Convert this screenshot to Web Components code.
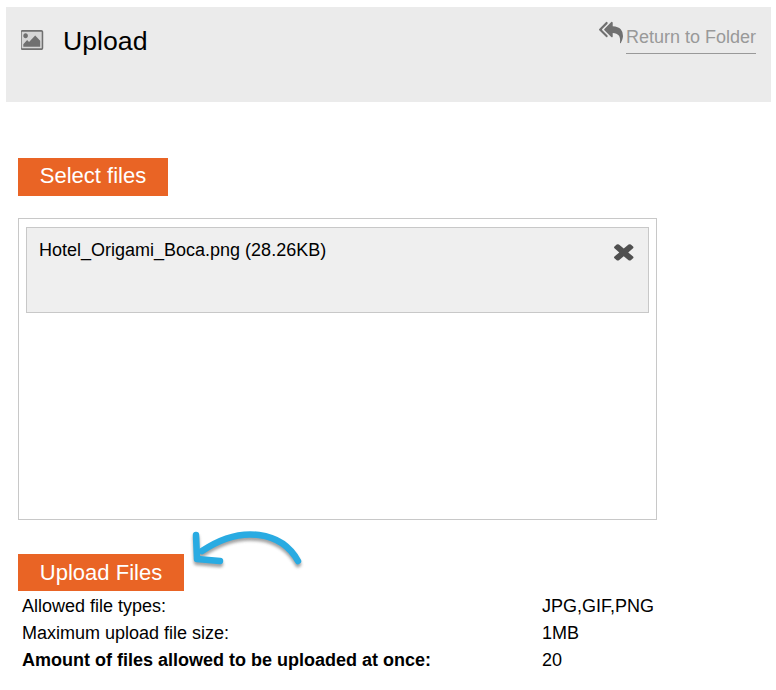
<!DOCTYPE html>
<html>
<head>
<meta charset="utf-8">
<title>Upload</title>
<style>
	html, body { margin: 0; padding: 0; background: #fff; }
	body { font-family: "Liberation Sans", Arial, sans-serif; color: #000; }
	orange-button[slot="select"] { padding-bottom: 2px; }
</style>
</head>
<body>
<upload-page>
	<upload-header slot="header" title="Upload" link="Return to Folder"></upload-header>
	<orange-button slot="select" width="150" height="38">Select files</orange-button>
	<file-item slot="file">Hotel_Origami_Boca.png (28.26KB)</file-item>
	<orange-button slot="upload" width="166" height="37">Upload Files</orange-button>
	<limits-table slot="limits"></limits-table>
</upload-page>

<script>
class UploadHeader extends HTMLElement {
	connectedCallback() {
		const shadow = this.attachShadow({ mode: "open" });
		shadow.innerHTML = `
			<style>
				:host {
					display: flex;
					justify-content: space-between;
					box-sizing: border-box;
					height: 95px;
					margin: 0 5px 0 6px;
					padding: 0 15px 0 15px;
					background: #ebebeb;
				}
				.title { display: flex; align-items: flex-start; padding-top: 19px; }
				svg.pic { width: 23px; height: 20px; margin-top: 4px; }
				h1 { margin: 0 0 0 19px; font-size: 26.67px; line-height: 30px; font-weight: normal; color: #000; }
				.back { display: flex; align-items: flex-start; padding-top: 15px; }
				svg.reply { width: 24px; height: 24px; margin-right: 3px; margin-top: -1px; }
				a {
					display: block;
					margin-top: 5px;
					height: 26px;
					line-height: 21px;
					font-size: 18px;
					color: #999;
					border-bottom: 1px solid #999;
					text-decoration: none;
				}
			</style>
			<div class="title">
				<svg class="pic" viewBox="0 128 1920 1536" preserveAspectRatio="none">
					<rect x="80" y="200" width="1760" height="1392" fill="#d6d6d6"/>
					<path fill="#707070" d="M576 576q0 80-56 136t-136 56-136-56-56-136 56-136 136-56 136 56 56 136zm1024 384v448h-1408v-192l320-320 160 160 512-512zm96-704h-1600q-13 0-22.500 9.500t-9.500 22.500v1216q0 13 9.500 22.500t22.500 9.500h1600q13 0 22.500-9.500t9.500-22.500v-1216q0-13-9.500-22.500t-22.500-9.500zm160 32v1216q0 66-47 113t-113 47h-1600q-66 0-113-47t-47-113v-1216q0-66 47-113t113-47h1600q66 0 113 47t47 113z"/>
				</svg>
				<h1>${this.getAttribute("title")}</h1>
			</div>
			<div class="back">
				<svg class="reply" viewBox="0 0 1792 1792">
					<path fill="#707070" d="M640 1082v70q0 42-39 59-13 5-25 5-27 0-45-19l-512-512q-19-19-19-45t19-45l512-512q29-31 70-14 39 17 39 59v69l-397 398q-19 19-19 45t19 45zm1152 38q0 58-17 133.500t-38.500 138-48 125-40.500 90.500l-20 40q-8 17-28 17-6 0-9-1-25-8-23-34 43-400-106-565-64-71-170.500-110.500t-267.500-52.500v251q0 42-39 59-13 5-25 5-27 0-45-19l-512-512q-19-19-19-45t19-45l512-512q29-31 70-14 39 17 39 59v262q411 28 599 221 169 173 169 509z"/>
				</svg>
				<a href="#">${this.getAttribute("link")}</a>
			</div>`;
	}
}

class OrangeButton extends HTMLElement {
	connectedCallback() {
		const shadow = this.attachShadow({ mode: "open" });
		shadow.innerHTML = `
			<style>
				:host {
					display: flex;
					align-items: center;
					justify-content: center;
					box-sizing: border-box;
					width: ${this.getAttribute("width")}px;
					height: ${this.getAttribute("height")}px;
					background: #e96425;
					color: #fff;
					font-size: 22px;
				}
			</style>
			<slot></slot>`;
	}
}

class FileItem extends HTMLElement {
	connectedCallback() {
		const shadow = this.attachShadow({ mode: "open" });
		shadow.innerHTML = `
			<style>
				:host {
					display: flex;
					justify-content: space-between;
					box-sizing: border-box;
					height: 86px;
					padding: 12px 14px 0 12px;
					background: #efefef;
					border: 1px solid #c8c8c8;
					font-size: 18px;
					line-height: 21px;
					color: #000;
				}
				svg { width: 20px; height: 19px; margin-top: 2px; }
			</style>
			<span><slot></slot></span>
			<svg viewBox="110 210 1218 1372" preserveAspectRatio="none">
				<path fill="#505050" d="M1298 1322q0 40-28 68l-136 136q-28 28-68 28t-68-28l-294-294-294 294q-28 28-68 28t-68-28l-136-136q-28-28-28-68t28-68l294-294-294-294q-28-28-28-68t28-68l136-136q28-28 68-28t68 28l294 294 294-294q28-28 68-28t68 28l136 136q28 28 28 68t-28 68l-294 294 294 294q28 28 28 68z"/>
			</svg>`;
	}
}

class LimitsTable extends HTMLElement {
	connectedCallback() {
		const rows = [
			["Allowed file types:", "JPG,GIF,PNG", false],
			["Maximum upload file size:", "1MB", false],
			["Amount of files allowed to be uploaded at once:", "20", true],
		];
		const shadow = this.attachShadow({ mode: "open" });
		shadow.innerHTML = `
			<style>
				:host {
					display: grid;
					grid-template-columns: 520px auto;
					grid-auto-rows: 27px;
					padding-left: 22px;
					font-size: 18px;
					line-height: 27px;
					color: #000;
				}
				.b { font-weight: bold; }
			</style>
			${rows.map((r) => `<div class="${r[2] ? "b" : ""}">${r[0]}</div><div>${r[1]}</div>`).join("")}`;
	}
}

class UploadPage extends HTMLElement {
	constructor() {
		super();
		const shadow = this.attachShadow({ mode: "open" });
		shadow.innerHTML = `
			<style>
				:host { display: block; padding-top: 7px; }
				.main { padding: 56px 0 0 18px; position: relative; }
				.list {
					box-sizing: border-box;
					width: 639px;
					height: 302px;
					margin: 22px 0 34px;
					padding: 8px 7px;
					border: 1px solid #c8c8c8;
				}
				.limits { margin: 0 0 0 -18px; padding-top: 2px; }
				/* arrow sits over the page, next to the upload button */
				.arrow {
					position: absolute;
					left: 190px;
					top: 416px;
					width: 140px;
					height: 60px;
					overflow: visible;
				}
			</style>
			<slot name="header"></slot>
			<div class="main">
				<slot name="select"></slot>
				<div class="list"><slot name="file"></slot></div>
				<slot name="upload"></slot>
				<div class="limits"><slot name="limits"></slot></div>
				<svg class="arrow" viewBox="0 0 140 60">
					<defs><filter id="s" x="-20%" y="-20%" width="140%" height="160%"><feGaussianBlur stdDeviation="1.800"/></filter></defs>
					<g fill="none" stroke-width="6.500" stroke-linecap="round" stroke-linejoin="round">
						<g stroke="#666" opacity="0.6" filter="url(#s)" transform="translate(0 3)">
							<path d="M108 43 C92 14 52 6 12 33"/>
							<path d="M6 17 L7 41 L30 43"/>
						</g>
						<g stroke="#29abe2">
							<path d="M108 43 C92 14 52 6 12 33"/>
							<path d="M6 17 L7 41 L30 43"/>
						</g>
					</g>
				</svg>
			</div>`;
	}
}

customElements.define("upload-header", UploadHeader);
customElements.define("orange-button", OrangeButton);
customElements.define("file-item", FileItem);
customElements.define("limits-table", LimitsTable);
customElements.define("upload-page", UploadPage);
</script>
</body>
</html>
